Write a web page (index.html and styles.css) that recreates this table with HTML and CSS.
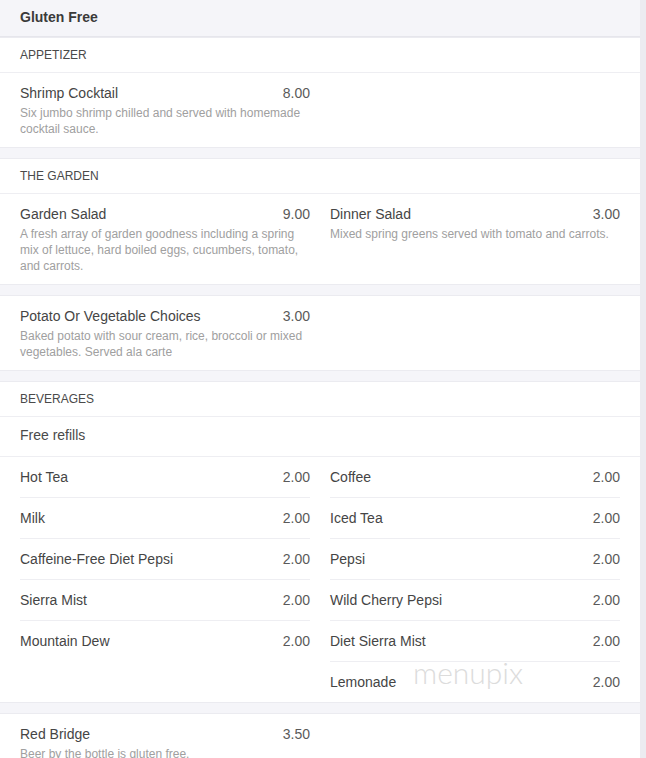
FILE: index.html
```html
<!DOCTYPE html>
<html>
<head>
<meta charset="utf-8">
<link rel="stylesheet" href="styles.css">
</head>
<body>
<div class="page">
  <div class="menu-title">Gluten Free</div>

  <section class="card">
    <div class="section-head">APPETIZER</div>
    <div class="items">
      <div class="item">
        <div class="item-top"><span class="name">Shrimp Cocktail</span><span class="price">8.00</span></div>
        <div class="desc">Six jumbo shrimp chilled and served with homemade cocktail sauce.</div>
      </div>
      <div class="item"></div>
    </div>
  </section>

  <section class="card">
    <div class="section-head">THE GARDEN</div>
    <div class="items">
      <div class="item">
        <div class="item-top"><span class="name">Garden Salad</span><span class="price">9.00</span></div>
        <div class="desc">A fresh array of garden goodness including a spring mix of lettuce, hard boiled eggs, cucumbers, tomato, and carrots.</div>
      </div>
      <div class="item">
        <div class="item-top"><span class="name">Dinner Salad</span><span class="price">3.00</span></div>
        <div class="desc">Mixed spring greens served with tomato and carrots.</div>
      </div>
    </div>
  </section>

  <section class="card">
    <div class="items">
      <div class="item">
        <div class="item-top"><span class="name">Potato Or Vegetable Choices</span><span class="price">3.00</span></div>
        <div class="desc">Baked potato with sour cream, rice, broccoli or mixed vegetables. Served ala carte</div>
      </div>
      <div class="item"></div>
    </div>
  </section>

  <section class="card">
    <div class="section-head">BEVERAGES</div>
    <div class="note">Free refills</div>
    <div class="list-cols">
      <div class="list-col">
        <div class="row"><span class="name">Hot Tea</span><span class="price">2.00</span></div>
        <div class="row"><span class="name">Milk</span><span class="price">2.00</span></div>
        <div class="row"><span class="name">Caffeine-Free Diet Pepsi</span><span class="price">2.00</span></div>
        <div class="row"><span class="name">Sierra Mist</span><span class="price">2.00</span></div>
        <div class="row"><span class="name">Mountain Dew</span><span class="price">2.00</span></div>
      </div>
      <div class="list-col">
        <div class="row"><span class="name">Coffee</span><span class="price">2.00</span></div>
        <div class="row"><span class="name">Iced Tea</span><span class="price">2.00</span></div>
        <div class="row"><span class="name">Pepsi</span><span class="price">2.00</span></div>
        <div class="row"><span class="name">Wild Cherry Pepsi</span><span class="price">2.00</span></div>
        <div class="row"><span class="name">Diet Sierra Mist</span><span class="price">2.00</span></div>
        <div class="row"><span class="name">Lemonade</span><span class="price">2.00</span></div>
      </div>
    </div>
    <div class="watermark">menupix</div>
  </section>

  <section class="card">
    <div class="items">
      <div class="item">
        <div class="item-top"><span class="name">Red Bridge</span><span class="price">3.50</span></div>
        <div class="desc">Beer by the bottle is gluten free.</div>
      </div>
      <div class="item"></div>
    </div>
  </section>
</div>
</body>
</html>
```

FILE: styles.css
```css
html, body {
  margin: 0;
  padding: 0;
}
body {
  background: #ececf1;
  font-family: "Liberation Sans", Arial, sans-serif;
  color: #333;
  width: 646px;
  overflow: hidden;
}
.page {
  width: 640px;
  background: #f5f5f9;
  display: flex;
  flex-direction: column;
  gap: 10px;
  min-height: 758px;
}
.menu-title {
  font-size: 14px;
  font-weight: bold;
  color: #3a3a3a;
  padding: 8px 20px 2px;
  height: 26px;
  line-height: 18px;
  border-bottom: 1px solid #e6e6ec;
  margin-bottom: -10px;
}
.card {
  background: #fff;
  border-top: 1px solid #ebebf0;
  border-bottom: 1px solid #ebebf0;
  position: relative;
}
.section-head {
  font-size: 12px;
  color: #4a4a4a;
  height: 34px;
  line-height: 34px;
  padding: 0 20px;
  border-bottom: 1px solid #eeeef2;
}
.items {
  display: grid;
  grid-template-columns: 290px 290px;
  column-gap: 20px;
  padding: 11px 20px 10px;
}
.item-top, .row {
  display: flex;
  justify-content: space-between;
  font-size: 14px;
  line-height: 18px;
}
.name {
  color: #454545;
}
.price {
  color: #5a5a5a;
}
.desc {
  margin-top: 3px;
  font-size: 12px;
  line-height: 16px;
  color: #a0a0a0;
}
.note {
  font-size: 14px;
  color: #4a4a4a;
  height: 39px;
  line-height: 37px;
  padding: 0 20px;
  border-bottom: 1px solid #eeeef2;
}
.list-cols {
  display: grid;
  grid-template-columns: 290px 290px;
  column-gap: 20px;
  padding: 0 20px;
}
.row {
  padding: 11px 0;
  height: 18px;
}
.row + .row {
  border-top: 1px solid #eeeef2;
}
.watermark {
  position: absolute;
  left: 413px;
  top: 275px;
  font-family: Lato, "Open Sans", sans-serif;
  font-size: 30px;
  font-weight: 300;
  color: #dcdcdc;
  line-height: 30px;
}
```
